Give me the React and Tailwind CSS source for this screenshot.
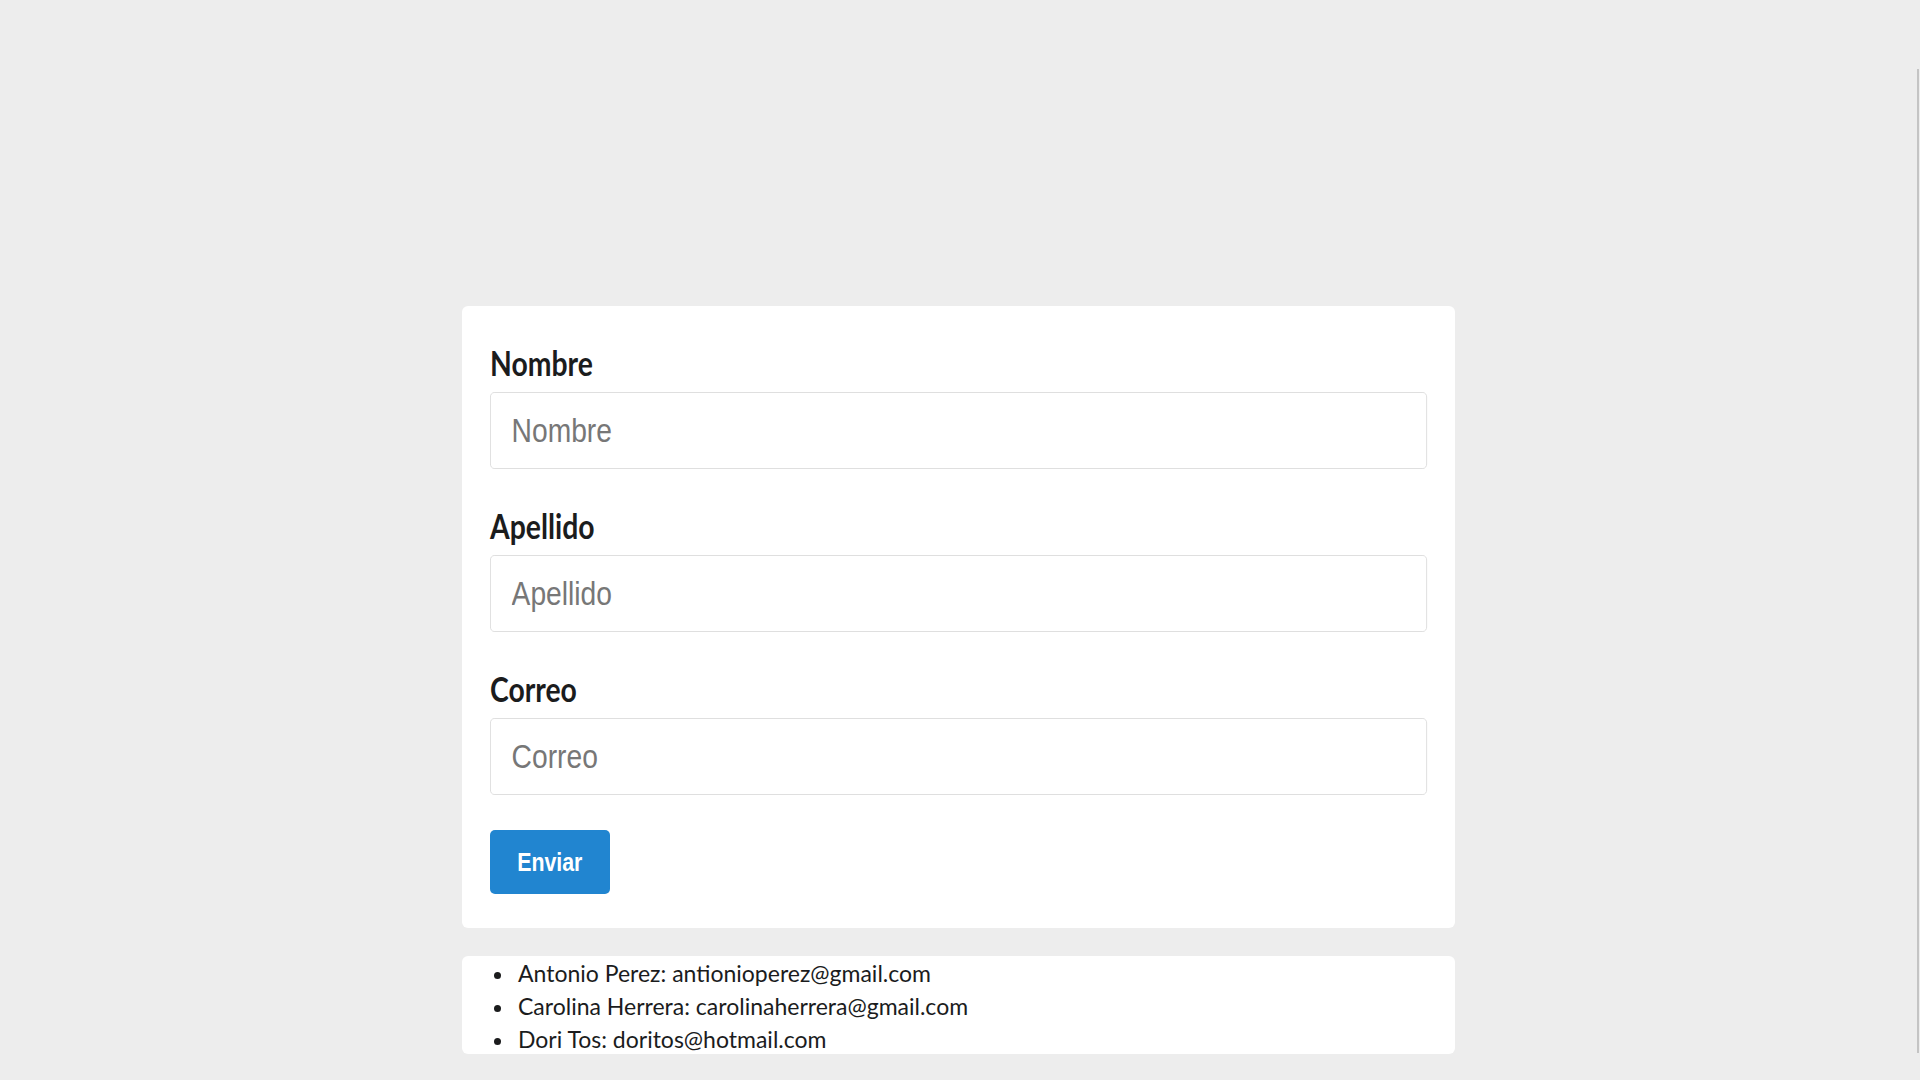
import React from "react";

function Field({ label }) {
  return (
    <div className="flex flex-col">
      <label className="mb-[9px] h-[42px] font-['Lato',sans-serif] text-[35px] leading-[42px] font-bold text-[#1b1c1d]">
        <span className="inline-block origin-left scale-x-[0.81]">{label}</span>
      </label>
      <div className="h-[77px] w-full">
        <input
          placeholder={label}
          className="h-[77px] w-[120.5%] origin-left scale-x-[0.83] rounded-[5px] border border-[#dcdcdc] bg-white pl-[25px] font-['Liberation_Sans',sans-serif] text-[34px] text-[#333] outline-none placeholder:text-[#777777]"
        />
      </div>
    </div>
  );
}

const people = [
  "Antonio Perez: antionioperez@gmail.com",
  "Carolina Herrera: carolinaherrera@gmail.com",
  "Dori Tos: doritos@hotmail.com",
];

export default function App() {
  return (
    <div className="relative min-h-screen overflow-hidden bg-[#ededed] pt-[306px] pb-[25px]">
      <div className="ml-[462px] flex w-[993px] flex-col gap-[28px]">
        <form className="flex flex-col gap-[35px] rounded-[6px] bg-white px-[28px] pt-[35px] pb-[34px]">
          <Field label="Nombre" />
          <Field label="Apellido" />
          <Field label="Correo" />
          <button
            type="button"
            className="h-[64px] w-[120px] rounded-[5px] bg-[#2185d0] font-['Liberation_Sans',sans-serif] text-[26px] font-bold text-white"
          >
            <span className="inline-block scale-x-[0.82]">Enviar</span>
          </button>
        </form>
        <div className="h-[98px] rounded-[6px] bg-white">
          <ul className="flex flex-col pt-[1px] font-['Lato',sans-serif] text-[23px] leading-[33px] text-[#1b1c1d]">
            {people.map((p) => (
              <li key={p} className="flex items-start pl-[32px]">
                <span className="mt-[15px] mr-[17px] h-[7px] w-[7px] shrink-0 rounded-full bg-[#1b1c1d]" />
                <span>{p}</span>
              </li>
            ))}
          </ul>
        </div>
      </div>
      <div className="absolute top-[69px] right-[1px] h-[984px] w-[2px] bg-[#c4c4c4]" />
    </div>
  );
}
